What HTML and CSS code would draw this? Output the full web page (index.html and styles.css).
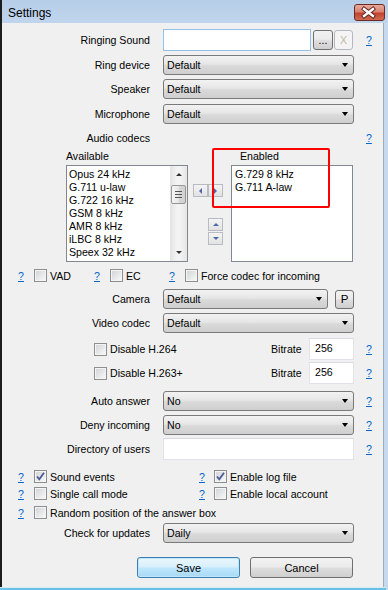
FILE: index.html
```
<!DOCTYPE html>
<html lang="en">
<head>
<meta charset="UTF-8">
<meta name="viewport" content="width=device-width, initial-scale=1.0">
<title>Settings</title>
<link rel="stylesheet" href="styles.css">
</head>
<body>
<div class="window">

    <!-- Title bar -->
    <div class="titlebar">
        <span class="title">Settings</span>
        <span class="close-btn">
            <svg width="31" height="17" viewBox="0 0 31 17">
                <path d="M11 5 L20 12 M20 5 L11 12" stroke="#5b2119" stroke-width="4.2" stroke-linecap="square" fill="none"/>
                <path d="M11 5 L20 12 M20 5 L11 12" stroke="#ffffff" stroke-width="2.4" stroke-linecap="square" fill="none"/>
            </svg>
        </span>
    </div>

    <div class="client">

        <!-- Sound devices -->
        <div class="row h22 mt6">
            <span class="lbl">Ringing Sound</span>
            <div class="ctl">
                <input class="edit edit-focus sound-path" type="text">
                <span class="btn dots">...</span>
                <span class="btn clear disabled">X</span>
            </div>
            <a class="help" href="#">?</a>
        </div>
        <div class="row mt4">
            <span class="lbl">Ring device</span>
            <div class="combo"><span>Default</span><i class="caret"></i></div>
        </div>
        <div class="row mt4">
            <span class="lbl">Speaker</span>
            <div class="combo"><span>Default</span><i class="caret"></i></div>
        </div>
        <div class="row mt5">
            <span class="lbl">Microphone</span>
            <div class="combo"><span>Default</span><i class="caret"></i></div>
        </div>

        <!-- Audio codecs -->
        <div class="row h16 mt6">
            <span class="lbl">Audio codecs</span>
            <div class="ctl"></div>
            <a class="help" href="#">?</a>
        </div>
        <div class="row h16 mt2">
            <span class="head-av">Available</span>
            <span>Enabled</span>
        </div>
        <div class="codecs mt1">
            <div class="list list-av">
                <div class="items">
                    <div>Opus 24 kHz</div>
                    <div>G.711 u-law</div>
                    <div>G.722 16 kHz</div>
                    <div>GSM 8 kHz</div>
                    <div>AMR 8 kHz</div>
                    <div>iLBC 8 kHz</div>
                    <div>Speex 32 kHz</div>
                </div>
                <div class="scrollbar">
                    <div class="sb-arrow"><i class="tri-up small"></i></div>
                    <div class="sb-track"><div class="sb-thumb"><i></i><i></i><i></i></div></div>
                    <div class="sb-arrow"><i class="tri-down small"></i></div>
                </div>
            </div>
            <div class="movers">
                <div class="pair">
                    <span class="mbtn"><i class="tri-left"></i></span>
                    <span class="mbtn"><i class="tri-right"></i></span>
                </div>
                <div class="updown">
                    <span class="mbtn"><i class="tri-up"></i></span>
                    <span class="mbtn"><i class="tri-down"></i></span>
                </div>
            </div>
            <div class="list list-en">
                <div class="items">
                    <div>G.729 8 kHz</div>
                    <div>G.711 A-law</div>
                </div>
            </div>
        </div>

        <div class="row h17 mt5 opts">
            <span class="opt g1"><a class="help" href="#">?</a><span class="chk"></span><span>VAD</span></span>
            <span class="opt g2"><a class="help" href="#">?</a><span class="chk"></span><span>EC</span></span>
            <span class="opt"><a class="help" href="#">?</a><span class="chk"></span><span>Force codec for incoming</span></span>
        </div>

        <!-- Video -->
        <div class="row mt5">
            <span class="lbl">Camera</span>
            <div class="combo combo-cam"><span>Default</span><i class="caret"></i></div>
            <span class="btn pbtn">P</span>
        </div>
        <div class="row mt4">
            <span class="lbl">Video codec</span>
            <div class="combo"><span>Default</span><i class="caret"></i></div>
        </div>
        <div class="row h22 mt5">
            <span class="chk-wrap"><span class="chk"></span><span>Disable H.264</span></span>
            <span class="bitrate-lbl">Bitrate</span>
            <input class="edit bitrate" type="text" value="256">
            <a class="help" href="#">?</a>
        </div>
        <div class="row h22 mt2">
            <span class="chk-wrap"><span class="chk"></span><span>Disable H.263+</span></span>
            <span class="bitrate-lbl">Bitrate</span>
            <input class="edit bitrate" type="text" value="256">
            <a class="help" href="#">?</a>
        </div>

        <!-- Calls -->
        <div class="row mt7">
            <span class="lbl">Auto answer</span>
            <div class="combo"><span>No</span><i class="caret"></i></div>
            <a class="help" href="#">?</a>
        </div>
        <div class="row mt4">
            <span class="lbl">Deny incoming</span>
            <div class="combo"><span>No</span><i class="caret"></i></div>
            <a class="help" href="#">?</a>
        </div>
        <div class="row h22 mt3">
            <span class="lbl">Directory of users</span>
            <input class="edit dir" type="text">
            <a class="help" href="#">?</a>
        </div>

        <!-- Misc options -->
        <div class="row h17 mt8 opts">
            <span class="opt col-left"><a class="help" href="#">?</a><span class="chk checked"><svg width="11" height="11" viewBox="0 0 11 11"><path d="M2 5.5 L4.3 8.3 L9 1.8" stroke="#4a5b94" stroke-width="1.8" fill="none"/></svg></span><span>Sound events</span></span>
            <span class="opt col-right"><a class="help" href="#">?</a><span class="chk checked"><svg width="11" height="11" viewBox="0 0 11 11"><path d="M2 5.5 L4.3 8.3 L9 1.8" stroke="#4a5b94" stroke-width="1.8" fill="none"/></svg></span><span>Enable log file</span></span>
        </div>
        <div class="row h17 opts">
            <span class="opt col-left"><a class="help" href="#">?</a><span class="chk"></span><span>Single call mode</span></span>
            <span class="opt col-right"><a class="help" href="#">?</a><span class="chk"></span><span>Enable local account</span></span>
        </div>
        <div class="row h17 mt2 opts">
            <span class="opt"><a class="help" href="#">?</a><span class="chk"></span><span>Random position of the answer box</span></span>
        </div>
        <div class="row mt2">
            <span class="lbl">Check for updates</span>
            <div class="combo"><span>Daily</span><i class="caret"></i></div>
        </div>

        <div class="row h21 mt14 buttons">
            <span class="btn push default">Save</span>
            <span class="btn push">Cancel</span>
        </div>
    </div>

    <div class="frame-bottom"></div>

    <!-- highlight drawn over the codec lists -->
    <div class="mark"></div>
</div>
</body>
</html>
```

FILE: styles.css
```
body {
    margin: 0;
    padding: 0;
    background-color: #c7d9ee;
    font-family: "Liberation Sans", Arial, sans-serif;
    font-size: 10.6px;
    color: #000;
}

.window {
    position: relative;
    width: 388px;
    height: 590px;
    overflow: hidden;
    background-color: #c7d9ee;
}

/* Title bar */
.titlebar {
    height: 23px;
    box-sizing: border-box;
    border-left: 2px solid #1d1d1d;
    background: linear-gradient(#b7cee8, #c0d5ed);
    display: flex;
    align-items: center;
    justify-content: space-between;
}

.title {
    font-size: 12px;
    margin-left: 6px;
    margin-top: 2px;
}

.close-btn {
    width: 31px;
    height: 17px;
    box-sizing: border-box;
    margin-right: 3px;
    margin-top: 2px;
    border: 1px solid #6b2a22;
    border-radius: 3px;
    background: linear-gradient(#e9ab9c 0%, #d98272 45%, #c3432f 55%, #cf6b52 100%);
    display: flex;
    align-items: center;
    justify-content: center;
}

.close-btn svg {
    margin-left: -2px;
    margin-top: -1px;
}

/* Client area */
.client {
    width: 384px;
    height: 564px;
    box-sizing: border-box;
    border-left: 2px solid #1d1d1d;
    border-right: 1px solid #9eacbb;
    background-color: #f0f0f0;
    display: flex;
    flex-direction: column;
}

.frame-bottom {
    width: 386px;
    height: 3px;
    border-top: 1px solid #dbe7f3;
    background-color: #67c3e4;
}

.row {
    display: flex;
    align-items: center;
    height: 20px;
    flex: none;
}

.h16 { height: 16px; }
.h17 { height: 17px; }
.h21 { height: 21px; }
.h22 { height: 22px; }

.mt1 { margin-top: 1px; }
.mt2 { margin-top: 2px; }
.mt3 { margin-top: 3px; }
.mt4 { margin-top: 4px; }
.mt5 { margin-top: 5px; }
.mt6 { margin-top: 6px; }
.mt7 { margin-top: 7px; }
.mt8 { margin-top: 8px; }
.mt14 { margin-top: 14px; }

.lbl {
    width: 148px;
    margin-right: 13px;
    text-align: right;
    flex: none;
}

.ctl {
    width: 191px;
    height: 100%;
    display: flex;
    align-items: center;
    flex: none;
}

.help {
    color: #0066cc;
    text-decoration: underline;
    margin-left: 12px;
    width: 6px;
    flex: none;
}

/* Combo boxes */
.combo {
    width: 191px;
    height: 20px;
    box-sizing: border-box;
    border: 1px solid #7a7a7a;
    border-radius: 3px;
    background: linear-gradient(#f2f2f2 0%, #e6e6e6 45%, #d9d9d9 55%, #cfcfcf 100%);
    display: flex;
    align-items: center;
    justify-content: space-between;
    padding: 0 5px 0 3px;
    flex: none;
}

.combo-cam {
    width: 165px;
}

.caret {
    width: 0;
    height: 0;
    border-left: 3.5px solid transparent;
    border-right: 3.5px solid transparent;
    border-top: 4px solid #000;
}

/* Edit boxes */
.edit {
    box-sizing: border-box;
    height: 22px;
    margin: 0;
    padding: 0 5px;
    border: 1px solid #e2e3ea;
    border-top-color: #d8dbe2;
    background-color: #fff;
    font-family: inherit;
    font-size: inherit;
    outline: none;
    flex: none;
}

.edit-focus {
    border-color: #94bfe8;
}

.sound-path {
    width: 148px;
    height: 22px;
}

.dir {
    width: 191px;
}

.bitrate {
    width: 45px;
    padding-bottom: 3px;
}

/* Buttons */
.btn {
    box-sizing: border-box;
    border: 1px solid #707070;
    border-radius: 3px;
    background: linear-gradient(#f2f2f2 0%, #ebebeb 45%, #dddddd 55%, #cfcfcf 100%);
    display: flex;
    align-items: center;
    justify-content: center;
    flex: none;
}

.dots {
    width: 20px;
    height: 20px;
    margin-left: 2px;
}

.clear {
    width: 19px;
    height: 20px;
    margin-left: 1px;
}

.btn.disabled {
    border-color: #b5b9bd;
    background: #f4f4f4;
    color: #c2b9a4;
}

.pbtn {
    width: 19px;
    height: 19px;
    margin-left: 7px;
    font-size: 11.5px;
}

.buttons .push {
    width: 103px;
    height: 21px;
    font-size: 11px;
}

.buttons .default {
    margin-left: 135px;
    margin-right: 10px;
    border-color: #3c7fb1;
    background: linear-gradient(#eaf6fd 0%, #d9f0fc 45%, #bee6fd 55%, #a7d9f5 100%);
    box-shadow: inset 0 0 0 1px #bfe6fa;
}

/* Codec lists */
.head-av {
    margin-left: 64px;
    width: 174px;
}

.codecs {
    display: flex;
    height: 97px;
    flex: none;
}

.list {
    width: 122px;
    height: 97px;
    box-sizing: border-box;
    border: 1px solid #828790;
    background-color: #fff;
    display: flex;
    overflow: hidden;
}

.list-av {
    margin-left: 64px;
}

.items {
    flex: 1;
    padding-top: 2px;
    line-height: 13px;
    overflow: hidden;
}

.list-av .items {
    padding-left: 2px;
}

.list-en .items {
    padding-left: 3px;
}

.scrollbar {
    width: 17px;
    display: flex;
    flex-direction: column;
    background: linear-gradient(90deg, #e3e3e3, #f3f3f3 40%, #f3f3f3 60%, #e6e6e6);
}

.sb-arrow {
    height: 17px;
    display: flex;
    align-items: center;
    justify-content: center;
}

.sb-track {
    flex: 1;
}

.sb-thumb {
    margin: 2px 1px 0 1px;
    height: 19px;
    box-sizing: border-box;
    border: 1px solid #979797;
    border-radius: 2px;
    background: linear-gradient(90deg, #f5f5f5, #e6e6e6 50%, #d6d6d6 55%, #d2d2d2);
    display: flex;
    flex-direction: column;
    align-items: center;
    justify-content: center;
    gap: 2px;
}

.sb-thumb i {
    width: 7px;
    height: 1px;
    background-color: #555;
}

.movers {
    width: 43px;
    position: relative;
}

.pair {
    display: flex;
    margin: 19px 0 0 5px;
}

.updown {
    display: flex;
    flex-direction: column;
    gap: 1px;
    margin: 21px 0 0 20px;
}

.mbtn {
    width: 15px;
    height: 13px;
    box-sizing: border-box;
    border: 1px solid #b8bcc2;
    background: linear-gradient(#f4f4f4, #e2e2e2);
    display: flex;
    align-items: center;
    justify-content: center;
}

.tri-left, .tri-right, .tri-up, .tri-down {
    width: 0;
    height: 0;
}

.tri-left {
    border-top: 3px solid transparent;
    border-bottom: 3px solid transparent;
    border-right: 3px solid #4d6aa6;
}

.tri-right {
    border-top: 3px solid transparent;
    border-bottom: 3px solid transparent;
    border-left: 3px solid #4d6aa6;
}

.tri-up {
    border-left: 3px solid transparent;
    border-right: 3px solid transparent;
    border-bottom: 3px solid #4d6aa6;
}

.tri-down {
    border-left: 3px solid transparent;
    border-right: 3px solid transparent;
    border-top: 3px solid #4d6aa6;
}

.tri-up.small {
    border-bottom-color: #333;
}

.tri-down.small {
    border-top-color: #333;
}

/* Check boxes */
.chk {
    width: 13px;
    height: 13px;
    box-sizing: border-box;
    border: 1px solid #8e8f8f;
    padding: 1px;
    background: linear-gradient(135deg, #d3d5d8, #f7f7f7) content-box, #f4f4f4;
    flex: none;
    position: relative;
}

.chk svg {
    position: absolute;
    left: 0;
    top: 0;
}

.opts {
    padding-left: 16px;
}

.opt {
    display: flex;
    align-items: center;
    flex: none;
}

.opt .help {
    margin-left: 0;
    margin-right: 10px;
}

.opt .chk {
    margin-right: 3px;
}

.g1 { width: 76px; }
.g2 { width: 75px; }

.col-left { width: 181px; }

.col-right .help {
    margin-right: 9px;
}

.chk-wrap {
    display: flex;
    align-items: center;
    margin-left: 92px;
    width: 177px;
    flex: none;
}

.chk-wrap .chk {
    margin-right: 3px;
}

.bitrate-lbl {
    width: 38px;
    flex: none;
}

/* red frame put over the lists */
.mark {
    position: absolute;
    left: 212px;
    top: 148px;
    width: 118px;
    height: 60px;
    box-sizing: border-box;
    border: 2px solid #ff0000;
    border-radius: 2px;
}
```
